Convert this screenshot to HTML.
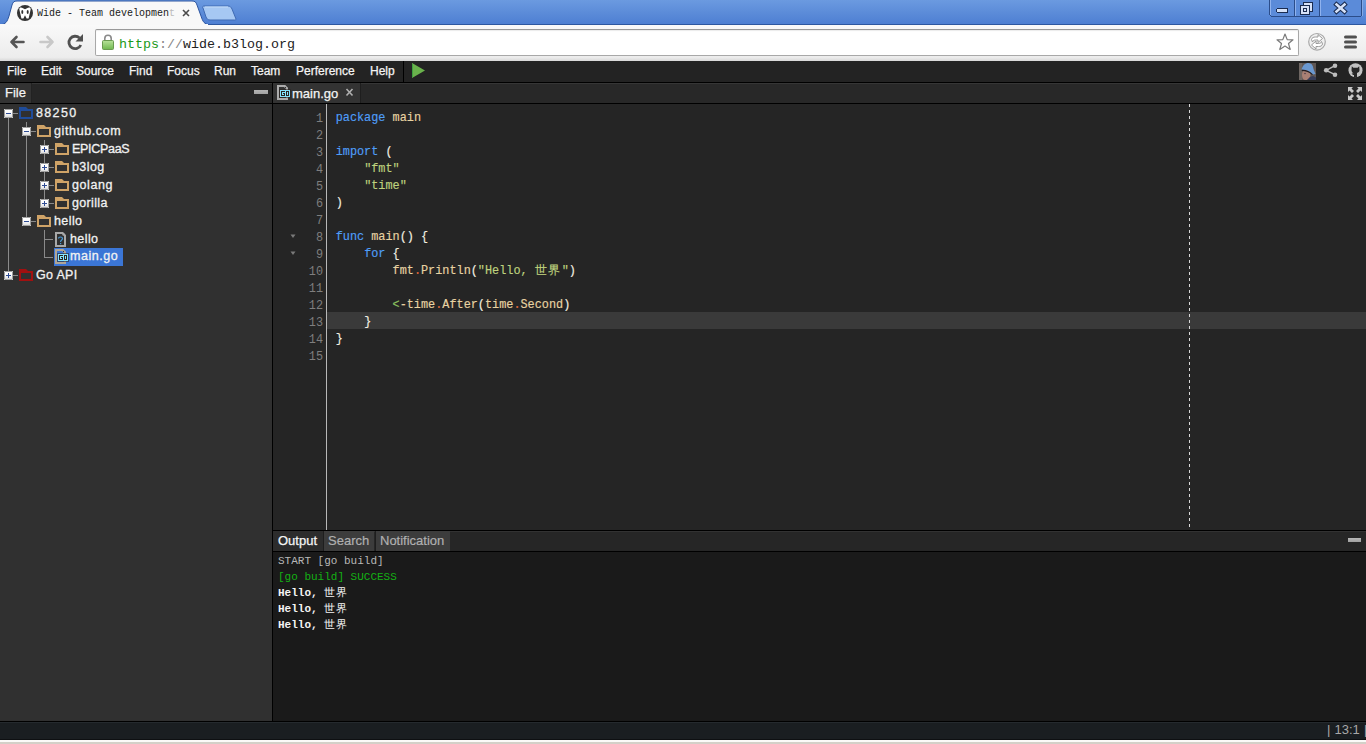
<!DOCTYPE html>
<html><head><meta charset="utf-8">
<style>
*{margin:0;padding:0;box-sizing:border-box}
html,body{width:1366px;height:744px;overflow:hidden;background:#1a1d20;font-family:"Liberation Sans",sans-serif}
.a{position:absolute}
#titlebar{left:0;top:0;width:1366px;height:25px;background:linear-gradient(#6b9ae0,#4e7fd2);border-bottom:1px solid #2d57a0}
#toolbar{left:0;top:25px;width:1366px;height:36px;background:linear-gradient(#f9f9f9,#ececec 90%,#d8d8d8)}
#omni{left:95px;top:29px;width:1204px;height:27px;background:#fff;border:1px solid #a8a8a8;border-top-color:#999;border-radius:2px;box-shadow:inset 0 1px 1px rgba(0,0,0,.08)}
#urltxt{left:119px;top:36px;font-family:"Liberation Mono",monospace;font-size:13.33px;line-height:17px;color:#222;white-space:pre}
#tabtitle{left:37px;top:5.5px;font-family:"Liberation Mono",monospace;font-size:10px;letter-spacing:0px;line-height:14px;color:#1a1a1a;white-space:pre;transform:scaleY(1.12);transform-origin:0 0}
#menubar{left:0;top:61px;width:1366px;height:21px;background:#232323}
.menu{position:absolute;top:0;height:21px;line-height:20px;font-size:12px;color:#f4f4f4;-webkit-text-stroke:0.25px #f4f4f4}
#hline1{left:0;top:82px;width:1366px;height:1px;background:#000}
#lefthead{left:0;top:83px;width:272px;height:20px;background:#262626;border-top:1px solid #363636}
#tabhead{left:273px;top:83px;width:1093px;height:20px;background:#282828;border-top:1px solid #363636}
#hline2{left:0;top:103px;width:1366px;height:1px;background:#000}
#tree{left:0;top:104px;width:272px;height:617px;background:#303030}
#vline{left:272px;top:83px;width:1px;height:638px;background:#000}
#editor{left:273px;top:104px;width:1093px;height:426px;background:#252525}
#gutterline{left:326px;top:104px;width:1px;height:426px;background:#b8b8b8}
#hline3{left:273px;top:530px;width:1093px;height:1px;background:#000}
#outhead{left:273px;top:531px;width:1093px;height:20px;background:#262626;border-top:1px solid #323232}
#hline4{left:273px;top:551px;width:1093px;height:1px;background:#000}
#output{left:273px;top:552px;width:1093px;height:169px;background:#1a1a1a}
#hline5{left:0;top:721px;width:1366px;height:1px;background:#000}
#status{left:0;top:722px;width:1366px;height:17px;background:#1a1e21;border-top:1px solid #252a2e}
#bot1{left:0;top:739px;width:1366px;height:1px;background:#0e1012}
#bot2{left:0;top:740px;width:1366px;height:2px;background:#fbfaf8}
#bot3{left:0;top:742px;width:1366px;height:2px;background:#d4d0c8}
.code{position:absolute;left:335.7px;-webkit-text-stroke:0.15px currentColor;font-family:"Liberation Mono",monospace;font-size:11.85px;color:#e8d3a2;white-space:pre;height:17px;line-height:17px}
.ln{position:absolute;left:290px;width:33px;text-align:right;font-family:"Liberation Mono",monospace;font-size:11.85px;color:#7e7e7e;height:17px;line-height:17px}
.kw{color:#4f9ef8}
.str{color:#bfd27e}
.dot{color:#e0683a}
.pun{color:#f2efe2}
.lt{color:#8cc060}
.tn{position:absolute;font-size:12.5px;color:#f2f2f2;-webkit-text-stroke:0.3px #f2f2f2;height:18px;line-height:18px;white-space:pre}
.out{position:absolute;left:278px;font-family:"Liberation Mono",monospace;font-size:11px;white-space:pre;height:16px;line-height:16px}
.tl{position:absolute;background:#8a8a8a}
.box{position:absolute;width:9px;height:9px;background:linear-gradient(#fff 40%,#e2e2e2);border:1px solid #a4a4a4;border-radius:1.5px}
.box i{position:absolute;left:1px;top:3px;width:5px;height:1px;background:#2f4c94}
.box b{position:absolute;left:3px;top:1px;width:1px;height:5px;background:#2f4c94}
.fold{position:absolute;width:14px;height:12px}
</style></head>
<body>
<div id="titlebar" class="a"></div>
<!-- active tab -->
<svg class="a" style="left:0;top:0" width="240" height="26">
  <path d="M0,25 C6,24 7,22 9,16 L12,5 C13,2 14,1 17,1 L192,1 C195,1 196,2 197,5 L201,16 C203,22 204,24 210,25 Z" fill="#f8f8f8" stroke="#2c55a0" stroke-width="1"/>
  <rect x="0" y="24" width="208" height="2" fill="#f8f8f8"/>
  <path d="M204,6 L228,6 C230,6 231,7 232,9 L236,19 C236,20 235,20 234,20 L210,20 C208,20 207,19 206,17 L203,8 C202,7 203,6 204,6 Z" fill="#a6c8f3" stroke="#3f6ab3" stroke-width="1"/><path d="M205,7 L228,7" stroke="#c4dcf8" stroke-width="1"/>
  <circle cx="25" cy="13" r="8" fill="#333"/>
  <path d="M19.3,9.2 C19.3,7.3 21.3,7.2 23,8.2 L25,9.2 L27,8.2 C28.7,7.2 30.7,7.3 30.7,9.2 L28.6,18.6 L26.6,18.6 L25,15.2 L23.4,18.6 L21.4,18.6 Z" fill="#fff"/>
  <ellipse cx="22.3" cy="12" rx="1" ry="2" fill="#333"/><ellipse cx="27.7" cy="12" rx="1" ry="2" fill="#333"/>
  <path d="M183,10 L189,16 M189,10 L183,16" stroke="#4a4a4a" stroke-width="1.6"/>
</svg>
<div id="tabtitle" class="a">Wide - Team developmen<span style="color:#bbb">t</span></div>
<!-- window controls -->
<svg class="a" style="left:1266px;top:0" width="100" height="20" shape-rendering="crispEdges">
  <path d="M3,0 L3,14 L5,17 L96,17 L96,0 Z" fill="#5b8bd9"/>
  <rect x="3" y="0" width="1" height="15" fill="#2b4d8a"/>
  <rect x="4" y="0" width="1" height="15" fill="#8fb2ee"/>
  <rect x="5" y="16" width="90" height="1" fill="#2b4d8a"/>
  <rect x="4" y="15" width="1" height="1" fill="#2b4d8a"/>
  <rect x="95" y="0" width="1" height="16" fill="#2b4d8a"/>
  <rect x="96" y="0" width="1" height="16" fill="#86aae6"/>
  <rect x="28" y="0" width="1" height="16" fill="#2b4d8a"/><rect x="29" y="0" width="1" height="16" fill="#8fb2ee"/>
  <rect x="53" y="0" width="1" height="16" fill="#2b4d8a"/><rect x="54" y="0" width="1" height="16" fill="#8fb2ee"/>
  <path d="M11,8 L21,8 L22,9 L22,12 L21,13 L11,13 L10,12 L10,9 Z" fill="#1a2c50"/>
  <rect x="11" y="9" width="10" height="3" fill="#d6e2f8"/>
  <rect x="37" y="2" width="10" height="10" fill="#1a2c50"/><rect x="38" y="3" width="8" height="8" fill="#d6e2f8"/>
  <rect x="34" y="5" width="10" height="10" fill="#1a2c50"/><rect x="35" y="6" width="8" height="8" fill="#d6e2f8"/>
  <rect x="37" y="8" width="4" height="4" fill="#1a2c50"/><rect x="38" y="9" width="2" height="2" fill="#d6e2f8"/>
</svg>
<svg class="a" style="left:1266px;top:0" width="100" height="20">
  <path d="M70.5,4.5 L78.5,11.5 M78.5,4.5 L70.5,11.5" stroke="#1a2c50" stroke-width="4.6" stroke-linecap="square"/>
  <path d="M70.5,4.5 L78.5,11.5 M78.5,4.5 L70.5,11.5" stroke="#d6e2f8" stroke-width="2.6" stroke-linecap="square"/>
</svg>
<div id="toolbar" class="a"></div>
<!-- nav icons -->
<svg class="a" style="left:0;top:25px" width="95" height="36">
  <path d="M11.5,17 L23.5,17 M16.5,12 L11.5,17 L16.5,22" fill="none" stroke="#555" stroke-width="2.6" stroke-linecap="round" stroke-linejoin="round"/>
  <path d="M40.5,17 L52.5,17 M47.5,12 L52.5,17 L47.5,22" fill="none" stroke="#c8c8c8" stroke-width="2.6" stroke-linecap="round" stroke-linejoin="round"/>
  <path d="M80.8,20 A6.2,6.2 0 1 1 79.5,13" fill="none" stroke="#505050" stroke-width="2.8"/>
  <path d="M75.5,16.5 L83,16.5 L83,9 Z" fill="#505050"/>
</svg>
<div id="omni" class="a"></div>
<svg class="a" style="left:95px;top:29px" width="30" height="27">
  <defs><linearGradient id="lg" x1="0" y1="0" x2="0" y2="1"><stop offset="0" stop-color="#b8e29a"/><stop offset="1" stop-color="#6fb84e"/></linearGradient></defs>
  <path d="M9.8,11 L9.8,9.5 A3.2,3.2 0 0 1 16.2,9.5 L16.2,11" fill="none" stroke="#8a8a8a" stroke-width="1.6"/>
  <rect x="7.5" y="11.5" width="11" height="9" rx="1" fill="url(#lg)" stroke="#6a9a50" stroke-width="1"/>
</svg>
<div id="urltxt" class="a"><span style="color:#1a9a1a">https</span><span style="color:#888">://</span>wide.b3log.org</div>
<svg class="a" style="left:1266px;top:25px" width="100" height="36">
  <path d="M19,9 L21.2,14.6 L27,14.8 L22.5,18.5 L24.2,24.5 L19,21 L13.8,24.5 L15.5,18.5 L11,14.8 L16.8,14.6 Z" fill="#fff" stroke="#7a7a7a" stroke-width="1.2" stroke-linejoin="round"/>
  <circle cx="51" cy="16.8" r="8.3" fill="#f0f0f0" stroke="#a8a8a8" stroke-width="1.2"/>
  <path d="M45.5,14.5 C46,12.5 47.5,12 49.5,12 L52,12 L52,9.5 L56.5,13.5 L52,17.5 L52,15 L49.5,15 C48,15 47,15.5 46.5,17 Z" fill="#fff" stroke="#9a9a9a" stroke-width="1"/>
  <path d="M56.5,19 C56,21 54.5,21.5 52.5,21.5 L50,21.5 L50,24 L45.5,20 L50,16 L50,18.5 L52.5,18.5 C54,18.5 55,18 55.5,16.5 Z" fill="#fff" stroke="#9a9a9a" stroke-width="1"/>
  <rect x="78" y="10.5" width="13" height="3" rx="1.5" fill="#505050"/>
  <rect x="78" y="15.5" width="13" height="3" rx="1.5" fill="#505050"/>
  <rect x="78" y="20.5" width="13" height="3" rx="1.5" fill="#505050"/>
</svg>
<div id="menubar" class="a">
  <span class="menu" style="left:7px">File</span>
  <span class="menu" style="left:41px">Edit</span>
  <span class="menu" style="left:76px">Source</span>
  <span class="menu" style="left:129px">Find</span>
  <span class="menu" style="left:167px">Focus</span>
  <span class="menu" style="left:214px">Run</span>
  <span class="menu" style="left:251px">Team</span>
  <span class="menu" style="left:296px">Perference</span>
  <span class="menu" style="left:370px">Help</span>
</div>
<div class="a" style="left:403px;top:61px;width:1px;height:21px;background:#000"></div>
<svg class="a" style="left:410px;top:61px" width="20" height="21">
  <path d="M2,2 L15,9.5 L2,17 Z" fill="#6ab24c"/>
  <rect x="2" y="3" width="1" height="13" fill="#3fa040"/>
</svg>
<!-- right icons -->
<svg class="a" style="left:1296px;top:61px" width="70" height="21">
  <defs><filter id="bl" x="0" y="0" width="1" height="1"><feGaussianBlur stdDeviation=".6"/></filter></defs>
  <rect x="3" y="2" width="17" height="17" fill="#5e5654"/>
  <g>
  <rect x="3" y="2" width="3" height="17" fill="#6e6662"/>
  <path d="M6,14 C6,11 7,8.5 10,8.5 C13,8.5 14.5,10.5 14.5,13.5 C14.5,17 12.5,19 9.5,19 C7,19 6,17 6,14 Z" fill="#a98074"/>
  <circle cx="9" cy="12.5" r=".7" fill="#3a3040"/>
  <path d="M5.5,8.8 C6.5,4.5 9,2 12.5,2 C15.5,2 17,4 17.5,8 L19.5,13 L17,13.5 C14,10 10,8.5 5.5,8.8 Z" fill="#6a98d0"/>
  <path d="M5.5,8.8 C10,8.5 14,10 17,13.5 L15.8,13.8 C13,11.2 10,10 6,10 Z" fill="#221e22"/>
  <path d="M11,19 L14,16 L17,15 L20,16.5 L20,19 Z" fill="#353c58"/>
  </g>
  <path d="M30.2,9.3 L39,4.7 M30.2,9.3 L39,13.7" stroke="#bdbdbd" stroke-width="1.4"/>
  <circle cx="30.2" cy="9.3" r="2.3" fill="#bdbdbd"/>
  <circle cx="39" cy="4.7" r="2.3" fill="#bdbdbd"/>
  <circle cx="39" cy="13.7" r="2.3" fill="#bdbdbd"/>
  <circle cx="59.5" cy="9.3" r="7" fill="#c2c2c2"/>
  <path d="M55.8,5.3 L57.4,6.8 L61.6,6.8 L63.2,5.3 L63.5,9 C63.5,10.8 62.3,11.6 61,11.9 L61,16.6 L58,16.6 L58,14 C56.8,14 56.1,13.4 55.6,12.5 L57.6,12.3 C56.3,11.6 55.5,10.6 55.5,9 Z" fill="#262626"/>
</svg>
<div id="hline1" class="a"></div>
<div id="lefthead" class="a"></div>
<div class="a" style="left:0;top:83px;width:32px;height:20px;background:#333;border-right:1px solid #222"></div>
<div class="a" style="left:5px;top:83px;font-size:13px;line-height:19px;color:#f4f4f4;-webkit-text-stroke:0.25px #f4f4f4">File</div>
<div class="a" style="left:254px;top:90px;width:14px;height:4px;background:linear-gradient(#b4b4b4,#a2a2a2)"></div>
<div id="tabhead" class="a"></div>
<div class="a" style="left:273px;top:83px;width:88px;height:20px;background:#333;border-right:1px solid #1e1e1e"></div>
<div class="a" style="left:292px;top:84px;font-size:13px;line-height:19px;color:#f4f4f4;-webkit-text-stroke:0.25px #f4f4f4">main.go</div>
<svg class="a" style="left:344.5px;top:88px" width="10" height="9"><path d="M1.5,1 L7.5,7.5 M7.5,1 L1.5,7.5" stroke="#b0b0b0" stroke-width="1.6"/></svg>
<div id="hline2" class="a"></div>
<div id="tree" class="a"></div>
<div id="vline" class="a"></div>
<div id="editor" class="a"></div>
<div id="gutterline" class="a"></div>
<div id="hline3" class="a"></div>
<div id="outhead" class="a"></div>
<div id="hline4" class="a"></div>
<div id="output" class="a"></div>
<div id="hline5" class="a"></div>
<div id="status" class="a"></div>
<div id="bot1" class="a"></div>
<div id="bot2" class="a"></div>
<div id="bot3" class="a"></div>
<svg width="0" height="0" style="position:absolute"><defs><linearGradient id="bxg" x1="0" y1="0" x2="0" y2="1"><stop offset="0" stop-color="#ffffff"/><stop offset=".5" stop-color="#fafafa"/><stop offset="1" stop-color="#dedede"/></linearGradient></defs></svg>
<div class="tl" style="left:8px;top:118px;width:1px;height:153px"></div>
<div class="tl" style="left:26px;top:122px;width:1px;height:95px"></div>
<div class="tl" style="left:44px;top:140px;width:1px;height:59px"></div>
<div class="tl" style="left:44px;top:230px;width:1px;height:28px"></div>
<svg class="a" style="left:4px;top:109px" width="9" height="9" shape-rendering="crispEdges"><rect x="0" y="0" width="9" height="9" fill="#a0a0a0"/><rect x="0" y="0" width="1" height="1" fill="#c8c8c8"/><rect x="8" y="0" width="1" height="1" fill="#c8c8c8"/><rect x="0" y="8" width="1" height="1" fill="#c8c8c8"/><rect x="8" y="8" width="1" height="1" fill="#c8c8c8"/><rect x="1" y="1" width="7" height="7" fill="url(#bxg)"/><rect x="2" y="4" width="5" height="1" fill="#2f4c94"/></svg>
<div class="tl" style="left:13px;top:113px;width:5px;height:1px"></div>
<svg class="a" style="left:19px;top:107px" width="14" height="12"><path d="M0,0 L7,0 L9,2 L14,2 L14,12 L0,12 Z M2,4 L2,10 L12,10 L12,4 Z" fill="#1f4c9a" fill-rule="evenodd"/></svg>
<div class="tn" style="left:36px;top:104px;letter-spacing:1.35px">88250</div>
<svg class="a" style="left:22px;top:127px" width="9" height="9" shape-rendering="crispEdges"><rect x="0" y="0" width="9" height="9" fill="#a0a0a0"/><rect x="0" y="0" width="1" height="1" fill="#c8c8c8"/><rect x="8" y="0" width="1" height="1" fill="#c8c8c8"/><rect x="0" y="8" width="1" height="1" fill="#c8c8c8"/><rect x="8" y="8" width="1" height="1" fill="#c8c8c8"/><rect x="1" y="1" width="7" height="7" fill="url(#bxg)"/><rect x="2" y="4" width="5" height="1" fill="#2f4c94"/></svg>
<div class="tl" style="left:31px;top:131px;width:5px;height:1px"></div>
<svg class="a" style="left:37px;top:125px" width="14" height="12"><path d="M0,0 L7,0 L9,2 L14,2 L14,12 L0,12 Z M2,4 L2,10 L12,10 L12,4 Z" fill="#cfa367" fill-rule="evenodd"/></svg>
<div class="tn" style="left:54px;top:122px;letter-spacing:0.62px">github.com</div>
<svg class="a" style="left:40px;top:145px" width="9" height="9" shape-rendering="crispEdges"><rect x="0" y="0" width="9" height="9" fill="#a0a0a0"/><rect x="0" y="0" width="1" height="1" fill="#c8c8c8"/><rect x="8" y="0" width="1" height="1" fill="#c8c8c8"/><rect x="0" y="8" width="1" height="1" fill="#c8c8c8"/><rect x="8" y="8" width="1" height="1" fill="#c8c8c8"/><rect x="1" y="1" width="7" height="7" fill="url(#bxg)"/><rect x="2" y="4" width="5" height="1" fill="#2f4c94"/><rect x="4" y="2" width="1" height="5" fill="#2f4c94"/></svg>
<div class="tl" style="left:49px;top:149px;width:5px;height:1px"></div>
<svg class="a" style="left:55px;top:143px" width="14" height="12"><path d="M0,0 L7,0 L9,2 L14,2 L14,12 L0,12 Z M2,4 L2,10 L12,10 L12,4 Z" fill="#cfa367" fill-rule="evenodd"/></svg>
<div class="tn" style="left:72px;top:140px;letter-spacing:-0.3px">EPICPaaS</div>
<svg class="a" style="left:40px;top:163px" width="9" height="9" shape-rendering="crispEdges"><rect x="0" y="0" width="9" height="9" fill="#a0a0a0"/><rect x="0" y="0" width="1" height="1" fill="#c8c8c8"/><rect x="8" y="0" width="1" height="1" fill="#c8c8c8"/><rect x="0" y="8" width="1" height="1" fill="#c8c8c8"/><rect x="8" y="8" width="1" height="1" fill="#c8c8c8"/><rect x="1" y="1" width="7" height="7" fill="url(#bxg)"/><rect x="2" y="4" width="5" height="1" fill="#2f4c94"/><rect x="4" y="2" width="1" height="5" fill="#2f4c94"/></svg>
<div class="tl" style="left:49px;top:167px;width:5px;height:1px"></div>
<svg class="a" style="left:55px;top:161px" width="14" height="12"><path d="M0,0 L7,0 L9,2 L14,2 L14,12 L0,12 Z M2,4 L2,10 L12,10 L12,4 Z" fill="#cfa367" fill-rule="evenodd"/></svg>
<div class="tn" style="left:72px;top:158px;letter-spacing:0.42px">b3log</div>
<svg class="a" style="left:40px;top:181px" width="9" height="9" shape-rendering="crispEdges"><rect x="0" y="0" width="9" height="9" fill="#a0a0a0"/><rect x="0" y="0" width="1" height="1" fill="#c8c8c8"/><rect x="8" y="0" width="1" height="1" fill="#c8c8c8"/><rect x="0" y="8" width="1" height="1" fill="#c8c8c8"/><rect x="8" y="8" width="1" height="1" fill="#c8c8c8"/><rect x="1" y="1" width="7" height="7" fill="url(#bxg)"/><rect x="2" y="4" width="5" height="1" fill="#2f4c94"/><rect x="4" y="2" width="1" height="5" fill="#2f4c94"/></svg>
<div class="tl" style="left:49px;top:185px;width:5px;height:1px"></div>
<svg class="a" style="left:55px;top:179px" width="14" height="12"><path d="M0,0 L7,0 L9,2 L14,2 L14,12 L0,12 Z M2,4 L2,10 L12,10 L12,4 Z" fill="#cfa367" fill-rule="evenodd"/></svg>
<div class="tn" style="left:72px;top:176px;letter-spacing:0.58px">golang</div>
<svg class="a" style="left:40px;top:199px" width="9" height="9" shape-rendering="crispEdges"><rect x="0" y="0" width="9" height="9" fill="#a0a0a0"/><rect x="0" y="0" width="1" height="1" fill="#c8c8c8"/><rect x="8" y="0" width="1" height="1" fill="#c8c8c8"/><rect x="0" y="8" width="1" height="1" fill="#c8c8c8"/><rect x="8" y="8" width="1" height="1" fill="#c8c8c8"/><rect x="1" y="1" width="7" height="7" fill="url(#bxg)"/><rect x="2" y="4" width="5" height="1" fill="#2f4c94"/><rect x="4" y="2" width="1" height="5" fill="#2f4c94"/></svg>
<div class="tl" style="left:49px;top:203px;width:5px;height:1px"></div>
<svg class="a" style="left:55px;top:197px" width="14" height="12"><path d="M0,0 L7,0 L9,2 L14,2 L14,12 L0,12 Z M2,4 L2,10 L12,10 L12,4 Z" fill="#cfa367" fill-rule="evenodd"/></svg>
<div class="tn" style="left:72px;top:194px;letter-spacing:0.33px">gorilla</div>
<svg class="a" style="left:22px;top:217px" width="9" height="9" shape-rendering="crispEdges"><rect x="0" y="0" width="9" height="9" fill="#a0a0a0"/><rect x="0" y="0" width="1" height="1" fill="#c8c8c8"/><rect x="8" y="0" width="1" height="1" fill="#c8c8c8"/><rect x="0" y="8" width="1" height="1" fill="#c8c8c8"/><rect x="8" y="8" width="1" height="1" fill="#c8c8c8"/><rect x="1" y="1" width="7" height="7" fill="url(#bxg)"/><rect x="2" y="4" width="5" height="1" fill="#2f4c94"/></svg>
<div class="tl" style="left:31px;top:221px;width:5px;height:1px"></div>
<svg class="a" style="left:37px;top:215px" width="14" height="12"><path d="M0,0 L7,0 L9,2 L14,2 L14,12 L0,12 Z M2,4 L2,10 L12,10 L12,4 Z" fill="#cfa367" fill-rule="evenodd"/></svg>
<div class="tn" style="left:54px;top:212px;letter-spacing:0.4px">hello</div>
<svg class="a" style="left:4px;top:271px" width="9" height="9" shape-rendering="crispEdges"><rect x="0" y="0" width="9" height="9" fill="#a0a0a0"/><rect x="0" y="0" width="1" height="1" fill="#c8c8c8"/><rect x="8" y="0" width="1" height="1" fill="#c8c8c8"/><rect x="0" y="8" width="1" height="1" fill="#c8c8c8"/><rect x="8" y="8" width="1" height="1" fill="#c8c8c8"/><rect x="1" y="1" width="7" height="7" fill="url(#bxg)"/><rect x="2" y="4" width="5" height="1" fill="#2f4c94"/><rect x="4" y="2" width="1" height="5" fill="#2f4c94"/></svg>
<div class="tl" style="left:13px;top:275px;width:5px;height:1px"></div>
<svg class="a" style="left:19px;top:269px" width="14" height="12"><path d="M0,0 L7,0 L9,2 L14,2 L14,12 L0,12 Z M2,4 L2,10 L12,10 L12,4 Z" fill="#a01010" fill-rule="evenodd"/></svg>
<div class="tn" style="left:36px;top:266px;letter-spacing:0.32px">Go API</div>
<div class="tl" style="left:44px;top:239px;width:9px;height:1px"></div>
<div class="tl" style="left:44px;top:257px;width:9px;height:1px"></div>
<div class="a" style="left:54px;top:248px;width:69px;height:18px;background:#3b76d6"></div>
<svg class="a" style="left:55px;top:232px" width="12" height="15"><path d="M0,0 L8,0 L11,3 L11,15 L0,15 Z M2,2 L2,13 L9,13 L9,4 L7,2 Z" fill="#a8a8a8" fill-rule="evenodd"/><rect x="7.5" y="1.5" width="2" height="2" fill="#a8a8a8"/><path d="M3.5,6.5 C3.5,4.5 7.5,4.5 7.5,6.5 C7.5,8 5.5,8 5.5,10" fill="none" stroke="#4a9ad6" stroke-width="1.2"/><rect x="5" y="11" width="1.2" height="1.2" fill="#4a9ad6"/></svg>
<div class="tn" style="left:70px;top:230px;letter-spacing:0.4px">hello</div>
<svg class="a" style="left:55px;top:249px" width="14" height="15" shape-rendering="crispEdges"><path d="M0,0 L8,0 L11,3 L11,15 L0,15 Z M2,2 L2,13 L9,13 L9,4 L7,2 Z" fill="#b0a696" fill-rule="evenodd" shape-rendering="auto"/><path d="M8,0 L8,3 L11,3 Z" fill="#b0a696" shape-rendering="auto"/><rect x="8" y="2" width="1" height="1" fill="#333"/><rect x="2" y="4" width="12" height="9" fill="#2a2420" opacity=".55"/><rect x="3" y="5" width="10" height="7" fill="#86e4ff"/><g fill="#2a2420"><rect x="4" y="6" width="4" height="1"/><rect x="4" y="6" width="1" height="5"/><rect x="4" y="10" width="4" height="1"/><rect x="7" y="8" width="1" height="3"/><rect x="6" y="8" width="1" height="1"/><rect x="9" y="6" width="3" height="1"/><rect x="9" y="10" width="3" height="1"/><rect x="9" y="6" width="1" height="5"/><rect x="11" y="6" width="1" height="5"/></g></svg>
<svg class="a" style="left:277px;top:85px" width="14" height="15" shape-rendering="crispEdges"><path d="M0,0 L8,0 L11,3 L11,15 L0,15 Z M2,2 L2,13 L9,13 L9,4 L7,2 Z" fill="#acacac" fill-rule="evenodd" shape-rendering="auto"/><path d="M8,0 L8,3 L11,3 Z" fill="#acacac" shape-rendering="auto"/><rect x="8" y="2" width="1" height="1" fill="#333"/><rect x="2" y="4" width="12" height="9" fill="#2a2420" opacity=".55"/><rect x="3" y="5" width="10" height="7" fill="#86e4ff"/><g fill="#2a2420"><rect x="4" y="6" width="4" height="1"/><rect x="4" y="6" width="1" height="5"/><rect x="4" y="10" width="4" height="1"/><rect x="7" y="8" width="1" height="3"/><rect x="6" y="8" width="1" height="1"/><rect x="9" y="6" width="3" height="1"/><rect x="9" y="10" width="3" height="1"/><rect x="9" y="6" width="1" height="5"/><rect x="11" y="6" width="1" height="5"/></g></svg>
<div class="tn" style="left:70px;top:247px;letter-spacing:0.55px">main.go</div>
<div class="a" style="left:327px;top:312px;width:1039px;height:17px;background:#3a3a3a"></div>
<div class="a" style="left:1189px;top:104px;width:1px;height:426px;background:repeating-linear-gradient(#d8d8d8 0,#d8d8d8 3px,transparent 3px,transparent 6px)"></div>
<div class="ln" style="top:111px">1</div>
<div class="code" style="top:110px"><span class="kw">package</span> main</div>
<div class="ln" style="top:128px">2</div>
<div class="ln" style="top:145px">3</div>
<div class="code" style="top:144px"><span class="kw">import</span> <span class="pun">(</span></div>
<div class="ln" style="top:162px">4</div>
<div class="code" style="top:161px">    <span class="str">"fmt"</span></div>
<div class="ln" style="top:179px">5</div>
<div class="code" style="top:178px">    <span class="str">"time"</span></div>
<div class="ln" style="top:196px">6</div>
<div class="code" style="top:195px"><span class="pun">)</span></div>
<div class="ln" style="top:213px">7</div>
<div class="ln" style="top:230px">8</div>
<div class="code" style="top:229px"><span class="kw">func</span> main<span class="pun">()</span> <span class="pun">{</span></div>
<div class="ln" style="top:247px">9</div>
<div class="code" style="top:246px">    <span class="kw">for</span> <span class="pun">{</span></div>
<div class="ln" style="top:264px">10</div>
<div class="code" style="top:263px">        fmt<span class="dot">.</span>Println<span class="pun">(</span><span class="str">"Hello, <span style="letter-spacing:1.5px">世界</span>"</span><span class="pun">)</span></div>
<div class="ln" style="top:281px">11</div>
<div class="ln" style="top:298px">12</div>
<div class="code" style="top:297px">        <span class="lt">&lt;</span>-time<span class="dot">.</span>After<span class="pun">(</span>time<span class="dot">.</span>Second<span class="pun">)</span></div>
<div class="ln" style="top:315px">13</div>
<div class="code" style="top:314px">    <span class="pun">}</span></div>
<div class="ln" style="top:332px">14</div>
<div class="code" style="top:331px"><span class="pun">}</span></div>
<div class="ln" style="top:349px">15</div>
<svg class="a" style="left:290px;top:234px" width="6" height="5"><path d="M0.5,0.5 L5.5,0.5 L3,4 Z" fill="#7a7a7a"/></svg>
<svg class="a" style="left:290px;top:251px" width="6" height="5"><path d="M0.5,0.5 L5.5,0.5 L3,4 Z" fill="#7a7a7a"/></svg>
<svg class="a" style="left:1348px;top:87px" width="14" height="13"><g fill="#c8c8c8"><path d="M0,0 L5,0 L3.5,1.5 L6,4 L4,6 L1.5,3.5 L0,5 Z"/><path d="M14,0 L9,0 L10.5,1.5 L8,4 L10,6 L12.5,3.5 L14,5 Z"/><path d="M0,13 L5,13 L3.5,11.5 L6,9 L4,7 L1.5,9.5 L0,8 Z"/><path d="M14,13 L9,13 L10.5,11.5 L8,9 L10,7 L12.5,9.5 L14,8 Z"/></g></svg>
<div class="a" style="left:273px;top:531px;width:50px;height:20px;background:#2c2c2c"></div>
<div class="a" style="left:323px;top:531px;width:51px;height:20px;background:#3c3c3c;border-left:1px solid #1e1e1e"></div>
<div class="a" style="left:375px;top:531px;width:75px;height:20px;background:#3c3c3c;border-left:1px solid #1e1e1e"></div>
<div class="a" style="left:278px;top:531px;font-size:13px;line-height:19px;color:#f4f4f4;-webkit-text-stroke:0.25px #f4f4f4">Output</div>
<div class="a" style="left:328px;top:531px;font-size:13px;line-height:19px;color:#b0b0b0;-webkit-text-stroke:0.2px #b0b0b0">Search</div>
<div class="a" style="left:380px;top:531px;font-size:13px;line-height:19px;color:#b0b0b0;-webkit-text-stroke:0.2px #b0b0b0">Notification</div>
<div class="a" style="left:1348px;top:538px;width:13px;height:4px;background:linear-gradient(#b8b8b8,#a0a0a0)"></div>
<div class="out" style="top:553px;color:#b8b8b8">START [go build]</div>
<div class="out" style="top:569px;color:#14b014">[go build] SUCCESS</div>
<div class="out" style="top:585px;color:#f4f4f4;font-weight:bold">Hello, <span style="font-weight:normal;letter-spacing:1px">世界</span></div>
<div class="out" style="top:601px;color:#f4f4f4;font-weight:bold">Hello, <span style="font-weight:normal;letter-spacing:1px">世界</span></div>
<div class="out" style="top:617px;color:#f4f4f4;font-weight:bold">Hello, <span style="font-weight:normal;letter-spacing:1px">世界</span></div>
<div class="a" style="left:1327px;top:721px;font-size:13px;line-height:17px;color:#a8a8a8;white-space:pre;word-spacing:0.5px">| 13:1 |</div>
</body></html>
